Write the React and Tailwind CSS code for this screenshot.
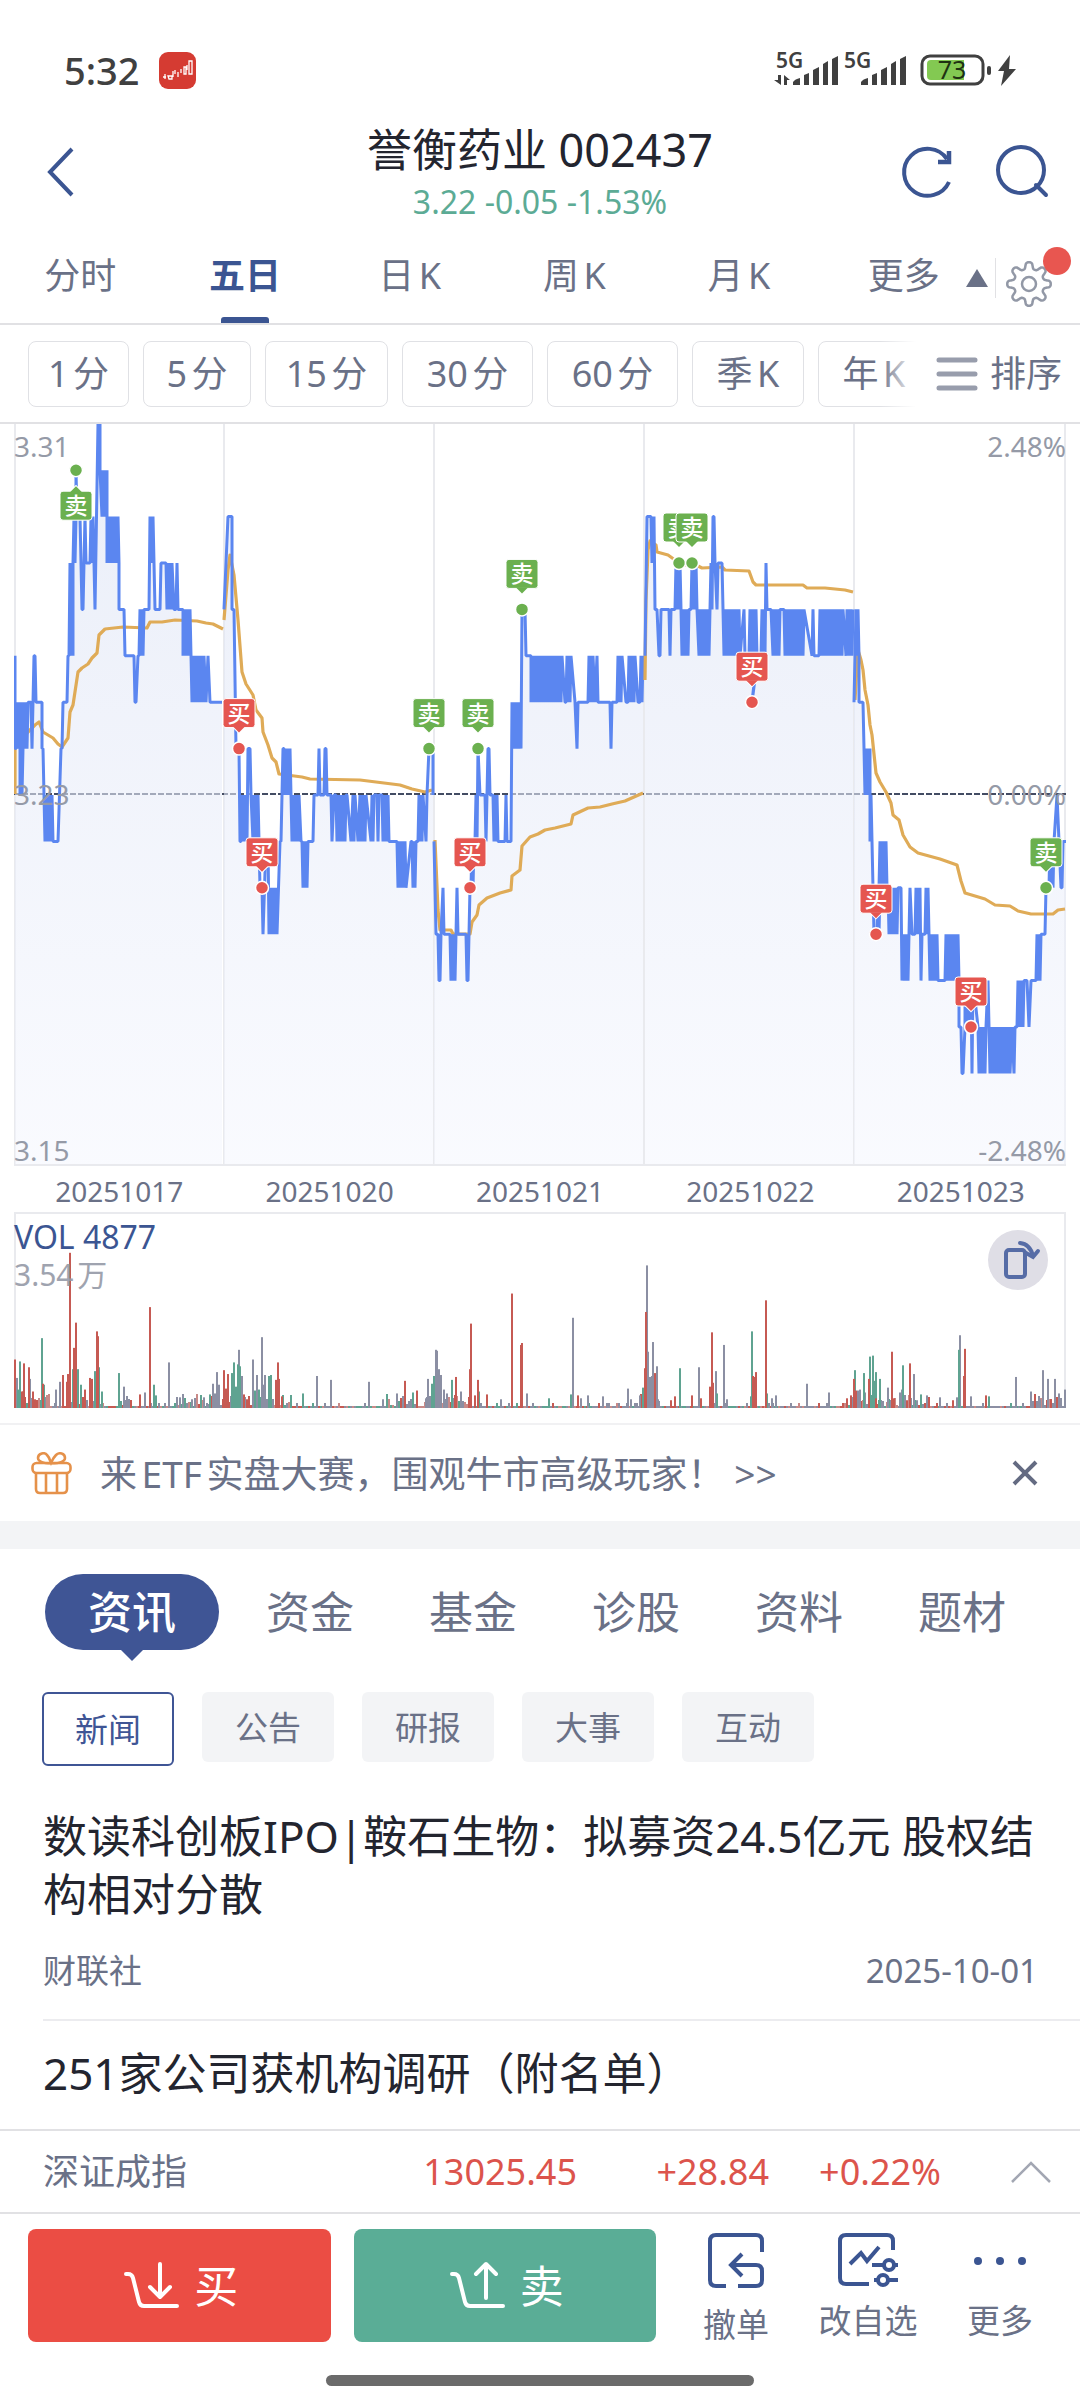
import React from "react";

const BASE_Y = 795;
const STEP_Y = 46.4;
const yOf = (level) => BASE_Y - STEP_Y * level;

// A two-item entry is a point [x, ticks from the reference price];
// a four-item entry is a fast oscillation [x1, x2, level a, level b].
const PRICE = [
  [[15, 3], [15, 1], [16, 20, 1, 2], [20, 22, 0, 2], [23, 28, 1, 2], [31, 2], [32, 1], [33, 2], [34, 3], [35, 3], [36, 2], [42, 2], [42, 1], [43, 1], [45, -1], [45, 53, -1, 0], [54, -1], [58, -1], [61, 1], [62, 1], [63, 2], [67, 2], [68, 3], [69, 73, 3, 5], [73, 76, 5, 6], [76, 7], [77, 6], [80, 6], [82, 4], [83, 4], [85, 6], [86, 5], [89, 5], [90, 94, 5, 6], [95, 4], [98, 8], [100, 8], [100, 7], [102, 107, 6, 7], [107, 119, 5, 6], [119, 4], [124, 4], [125, 3], [134, 3], [135, 2], [136, 2], [138, 3], [139, 144, 3, 4], [149, 4], [150, 6], [150, 153, 5, 6], [155, 4], [160, 4], [161, 5], [166, 5], [167, 172, 4, 5], [174, 4], [176, 178, 4, 5], [183, 4], [183, 191, 3, 4], [192, 201, 2, 3], [203, 2], [204, 3], [206, 2], [208, 3], [210, 2], [222, 2]],
  [[224, 4], [226, 5], [228, 6], [232, 6], [232, 4], [234, 4], [236, 1], [239, 1], [240, -1], [241, 247, -1, 0], [248, 1], [250, 1], [251, 0], [253, 258, -1, 0], [260, -2], [262, -2], [263, -3], [266, -1], [268, -1], [269, 277, -3, -2], [280, -1], [281, -1], [283, 1], [284, 290, 1, 0], [291, 299, 0, -1], [301, -1], [302, 308, -1, -2], [309, -1], [313, -1], [314, 0], [318, 0], [319, 1], [320, 0], [324, 0], [325, 1], [326, 1], [327, 0], [331, 0], [332, -1], [334, 0], [336, 346, 0, -1], [347, 0], [351, -1], [353, 355, 0, -1], [358, -1], [360, 366, 0, -1], [371, -1], [372, 374, 0, -1], [377, 379, 0, -1], [382, 389, 0, -1], [396, -1], [397, 406, -1, -2], [411, -1], [412, 416, -1, -2], [418, -1], [419, 423, 0, -1], [426, -1], [427, 0], [429, 1], [433, 1], [433, 0]],
  [[434, -1], [436, -3], [438, -3], [439, -4], [440, -4], [441, -3], [443, -2], [444, -3], [450, -3], [451, 455, -4, -3], [456, -3], [457, -2], [458, -3], [466, -3], [467, -4], [468, -4], [469, -3], [470, -2], [471, 474, -2, -1], [475, 477, -1, 0], [478, 1], [480, 0], [485, 0], [486, -1], [487, 0], [488, 1], [489, 1], [490, 0], [492, 0], [493, 498, 0, -1], [505, -1], [506, 0], [507, -1], [511, -1], [512, 2], [513, 521, 1, 2], [522, 4], [525, 4], [526, 3], [531, 3], [531, 562, 2, 3], [565, 2], [566, 571, 2, 3], [575, 2], [577, 1], [578, 2], [586, 2], [588, 593, 2, 3], [595, 2], [597, 3], [598, 2], [610, 2], [611, 1], [612, 2], [616, 2], [617, 622, 2, 3], [626, 2], [628, 635, 2, 3], [638, 2], [640, 643, 2, 3]],
  [[645, 3], [647, 6], [651, 6], [652, 5], [654, 6], [655, 4], [657, 4], [659, 3], [660, 3], [661, 4], [669, 4], [670, 3], [671, 4], [674, 4], [675, 680, 4, 5], [682, 689, 3, 4], [691, 697, 4, 5], [699, 702, 3, 4], [703, 710, 3, 4], [710, 712, 4, 5], [713, 6], [714, 6], [715, 5], [717, 4], [718, 5], [722, 5], [723, 4], [724, 740, 3, 4], [744, 4], [745, 3], [746, 3], [749, 757, 3, 4], [752, 2], [758, 3], [761, 765, 3, 4], [766, 5], [767, 4], [770, 4], [771, 4], [773, 780, 3, 4], [784, 4], [785, 804, 3, 4], [812, 3], [813, 4], [814, 3], [818, 3], [819, 822, 3, 4], [824, 843, 3, 4], [846, 853, 3, 4]],
  [[854, 2], [855, 859, 3, 4], [859, 2], [863, 2], [864, 1], [865, 870, 0, 1], [870, 872, -1, 0], [873, -2], [874, -3], [876, -3], [877, 880, -3, -2], [879, 887, -2, -1], [888, -2], [889, 898, -3, -2], [901, -2], [902, 909, -4, -3], [910, -2], [912, -3], [915, 920, -3, -2], [921, -4], [922, -3], [925, 929, -3, -2], [930, 938, -4, -3], [944, -4], [945, 959, -4, -3], [959, -5], [961, -5], [962, -6], [963, -6], [965, -5], [965, 971, -4, -5], [972, -6], [973, -4], [978, -5], [979, 986, -6, -5], [988, -4], [989, -5], [990, 1010, -6, -5], [1012, -5], [1014, -6], [1015, -5], [1017, 1024, -5, -4], [1027, -4], [1029, -5], [1031, -4], [1035, -4], [1036, 1041, -4, -3], [1045, -3], [1046, -2], [1049, 1054, -2, -1], [1057, 0], [1059, -1], [1061, -2], [1062, -2], [1063, -1], [1066, -1]],
];

const AVERAGE = [
  "15,794 15,748 25,735 35,725 39,722 43,732 53,738 58,744 62,747 68,738 70,712 73,705 78,672 82,668 88,664 92,658 97,653 99,635 105,629 123,627 147,628 150,622 162,622 175,620 197,621 206,623 213,624 223,629",
  "224,620 228,570 230,555 234,575 238,620 242,672 246,684 253,695 256,710 262,718 263,732 268,745 272,758 276,762 279,774 302,777 310,779 360,780 376,782 400,785 412,789 425,792 432,790",
  "435,840 438,910 440,930 451,930 453,934 470,934 472,922 477,915 479,905 487,898 500,893 511,890 512,876 520,870 522,846 530,837 538,834 545,830 555,828 571,824 573,815 588,808 600,807 612,804 625,801 643,793",
  "645,680 646,600 648,550 650,541 656,545 657,552 668,555 675,560 683,565 698,566 702,568 722,567 725,570 749,571 753,582 756,585 803,585 807,588 825,588 845,590 853,592",
  "855,700 858,650 861,660 863,670 865,690 868,705 870,725 872,735 876,773 880,782 886,792 891,803 893,815 899,820 903,835 910,847 918,853 940,859 957,865 961,881 965,893 985,899 995,905 1010,906 1018,911 1031,914 1053,914 1058,910 1065,909",
];

const TRADES = [
  { x: 76, level: 7, side: "sell", below: true },
  { x: 239, level: 1, side: "buy" },
  { x: 262, level: -2, side: "buy" },
  { x: 429, level: 1, side: "sell" },
  { x: 470, level: -2, side: "buy" },
  { x: 478, level: 1, side: "sell" },
  { x: 522, level: 4, side: "sell" },
  { x: 679, level: 5, side: "sell" },
  { x: 692, level: 5, side: "sell" },
  { x: 752, level: 2, side: "buy" },
  { x: 876, level: -3, side: "buy" },
  { x: 971, level: -5, side: "buy" },
  { x: 1046, level: -2, side: "sell" },
];

const VOLUME = {
  "#8b8fa3": "17,31 30,30 56,19 60,27 124,22 127,9 145,16 169,47 180,11 192,9 204,11 213,25 215,15 217,37 219,24 239,60 242,33 253,50 257,34 262,73 263,24 265,34 317,33 331,29 369,27 383,9 397,15 426,10 428,30 436,60 437,59 439,40 441,34 444,19 447,15 461,17 501,9 527,15 573,93 581,10 588,13 603,12 628,20 631,9 640,13 647,147 648,58 650,32 652,33 653,68 657,43 658,9 699,42 716,38 724,65 727,9 772,10 776,13 807,25 829,16 858,18 860,19 865,16 888,21 900,16 902,19 914,35 917,8 927,13 940,11 957,11 960,75 971,12 1016,32 1031,17 1040,9 1043,39 1048,30 1055,30 1059,15 1061,8 1065,19",
  "#5fa391": "18,19 20,48 42,72 44,24 73,40 78,40 81,24 95,38 99,42 102,17 119,36 154,24 156,13 210,14 232,36 234,47 236,22 238,45 240,43 255,18 259,19 269,33 271,34 303,15 413,16 432,25 434,33 452,29 479,17 549,10 571,14 643,21 680,41 717,15 751,12 752,79 767,15 855,39 864,36 870,53 873,54 874,28 876,37 880,30 903,44 921,14 959,60 989,12",
  "#c65a53": "15,50 22,17 23,17 24,46 29,42 33,17 35,9 43,25 63,34 67,27 68,35 70,160 74,62 76,88 85,19 90,31 92,30 97,79 98,74 140,14 150,104 224,39 226,20 228,35 244,14 247,9 276,29 278,47 279,30 282,12 405,28 417,18 456,32 470,40 471,87 475,13 478,29 487,14 512,118 521,65 522,67 578,13 645,41 646,99 655,36 675,12 671,8 692,13 701,10 710,22 712,78 713,26 753,33 754,32 756,37 766,111 847,10 851,13 854,30 856,18 869,30 876,10 892,58 894,10 907,8 910,46 953,8 964,33 965,61 986,13 1057,11",
};
const VOLUME_SCALE = 0.97;

function expand(series) {
  const pts = [];
  series.forEach((item) => {
    if (item.length === 2) {
      pts.push([item[0], yOf(item[1])]);
      return;
    }
    const [x1, x2, a, b] = item;
    let high = false;
    for (let x = x1; x <= x2; x += 1) {
      pts.push([x, yOf(high ? b : a)]);
      high = !high;
    }
  });
  return pts;
}

function TradeTag({ x, level, side, below }) {
  const y = yOf(level);
  const color = side === "buy" ? "#e55650" : "#6bb04f";
  const top = below ? y + 21 : y - 50;
  const pointer = below
    ? `M${x - 6} ${top + 1} L${x} ${top - 5} L${x + 6} ${top + 1}`
    : `M${x - 6} ${top + 28} L${x} ${top + 34} L${x + 6} ${top + 28}`;
  return (
    <g>
      <path d={pointer} fill={color} stroke="#fff" strokeWidth="2" />
      <rect x={x - 16} y={top} width="32" height="29" rx="3" fill={color} stroke="#fff" strokeWidth="1" />
      <path d={pointer} fill={color} />
      <text x={x} y={top + 23} fontSize="23" textAnchor="middle" fill="#fff" fontWeight="500">
        {side === "buy" ? "买" : "卖"}
      </text>
      <circle cx={x} cy={y} r="6.5" fill={color} stroke="#fff" strokeWidth="1.5" />
    </g>
  );
}

function PriceChart() {
  return (
    <svg viewBox="14 424 1052 742" className="block h-auto w-full" role="img" aria-label="五日走势">
      <defs>
        <linearGradient id="area" gradientUnits="userSpaceOnUse" x1="0" y1="424" x2="0" y2="1166">
          <stop offset="0" stopColor="#dbe2f4" />
          <stop offset="1" stopColor="#f5f7fe" />
        </linearGradient>
      </defs>
      <g stroke="#e9eaee" strokeWidth="2">
        {[15, 224, 434, 644, 854, 1065].map((x) => (
          <line key={x} x1={x} x2={x} y1="424" y2="1165" />
        ))}
        <line x1="14" x2="1066" y1="1165" y2="1165" />
      </g>
      <line x1="14" x2="1066" y1="794" y2="794" stroke="#434c63" strokeWidth="2" strokeDasharray="6 2" />
      {PRICE.map((day, i) => {
        const pts = expand(day);
        const line = pts.map((p) => p.join(",")).join(" ");
        return (
          <g key={i}>
            <polygon
              points={`${pts[0][0]},1164 ${line} ${pts[pts.length - 1][0]},1164`}
              fill="url(#area)"
              fillOpacity="0.58"
            />
            <polyline points={AVERAGE[i]} fill="none" stroke="#dfab57" strokeWidth="3.2" strokeLinejoin="round" />
            <polyline points={line} fill="none" stroke="#5b86f0" strokeWidth="3" strokeLinejoin="bevel" />
          </g>
        );
      })}
      {TRADES.map((t) => (
        <TradeTag key={t.x} {...t} />
      ))}
    </svg>
  );
}

function VolumeChart() {
  const small = [];
  const colors = ["#8b8fa3", "#5fa391", "#c65a53", "#8b8fa3", "#c98a88"];
  const busy = [[15, 50], [62, 104], [120, 132], [176, 240], [232, 292], [385, 420], [425, 470], [640, 660], [845, 930], [1030, 1066]];
  for (let i = 0; i < 525; i += 1) {
    const x = 15 + i * 2;
    const r = (i * 7919 + ((i * i) % 31) * 977) % 101;
    const active = busy.some(([a, b]) => x >= a && x <= b);
    small.push([x, active ? 2 + (r % 13) : r > 84 ? 5 : 2, colors[r % 5]]);
  }
  return (
    <svg viewBox="14 1212 1052 197" className="block h-auto w-full" role="img" aria-label="成交量">
      <path d="M15 1408 V1213 H1065 V1408" fill="none" stroke="#e9eaee" strokeWidth="2" />
      {small.map(([x, h, c]) => (
        <rect key={x} x={x - 1} y={1408 - h} width="2" height={h} fill={c} />
      ))}
      {Object.entries(VOLUME).map(([color, list]) =>
        list.split(" ").map((pair) => {
          const [x, v] = pair.split(",").map(Number);
          const h = v * VOLUME_SCALE;
          return <rect key={color + pair} x={x - 1} y={1408 - h} width="2" height={h} fill={color} />;
        })
      )}
    </svg>
  );
}

function StatusBar() {
  return (
    <div className="flex h-[140px] items-center justify-between pl-16 pr-[62px]">
      <div className="flex items-center gap-[19px]">
        <span className="text-[38px] leading-none font-medium text-[#404040]">5:32</span>
        <svg width="37" height="37" viewBox="0 0 37 37">
          <rect width="37" height="37" rx="9" fill="#d53b32" />
          <path d="M4 25 h3 M6 22 v5 M9 24 h4 v3 h-3 z M14 19 v6 M16 18 v4 M19 20 v5 M22 17 v4 M25 15 h2 v7 h-2 z M30 9 h3 v13 h-3 z M28 13 v5" fill="none" stroke="#fff" strokeWidth="1.3" />
        </svg>
      </div>
      <svg width="244" height="60" viewBox="774 39 244 60" role="img" aria-label="5G 信号，电量 73%">
        <g fill="#404040">
          <text x="776" y="67" fontSize="21" fontWeight="600">5G</text>
          <text x="844" y="67" fontSize="21" fontWeight="600">5G</text>
          <path d="M778 74 h3 v10 l-7-5 h4z M784 84 v-10 l6 5 h-3 v5z" />
          {[793, 861].map((x) => (
            <g key={x}>
              <path d={`M${x} 84 v-3 q2-3 7-4 v7z`} />
              <path d={`M${x + 11} 84 v-10 l5-2 v12z`} />
              <path d={`M${x + 20} 84 v-15 l6-3 v18z`} />
              <path d={`M${x + 30} 84 v-21 l5-3 v24z`} />
              <path d={`M${x + 39} 84 v-26 l6-3 v29z`} />
            </g>
          ))}
          <rect x="987" y="65" width="4" height="9" rx="2" />
          <path d="M1010 54 l-12 16 h6 l-3 15 L1016 68 h-7z" />
        </g>
        <rect x="922" y="55" width="61" height="28" rx="8" fill="#fff" stroke="#404040" strokeWidth="3" />
        <path d="M964 59 H931 q-4 0-4 4 V75 q0 4 4 4 H964z" fill="#83c952" />
        <text x="952" y="78" fontSize="25" textAnchor="middle" fill="#1f3312">73</text>
      </svg>
    </div>
  );
}

function Header() {
  return (
    <header className="grid h-[92px] grid-cols-[1fr_auto_1fr] items-center">
      <button aria-label="返回" className="justify-self-start pl-[46px]">
        <svg width="30" height="52" viewBox="0 0 30 52" fill="none" stroke="#3b5592" strokeWidth="4">
          <path d="M26 3 L4 26 L26 49" />
        </svg>
      </button>
      <div className="flex flex-col items-center">
        <h1 className="text-[45px] leading-[60px] text-[#23252f]">誉衡药业 002437</h1>
        <p className="text-[32px] leading-[44px] text-[#5cab95]">3.22 -0.05 -1.53%</p>
      </div>
      <div className="flex items-center gap-[34px] justify-self-end pr-[30px]">
        <button aria-label="刷新">
          <svg className="block" width="60" height="60" viewBox="0 0 60 60" fill="none" stroke="#3b5592" strokeWidth="4">
            <path d="M51 17 A23.500 23.500 0 1 0 53 40" />
            <path d="M53 9 V20 H42" strokeWidth="4.500" />
          </svg>
        </button>
        <button aria-label="搜索">
          <svg className="block" width="60" height="60" viewBox="0 0 60 60" fill="none" stroke="#3b5592" strokeWidth="4">
            <circle cx="31" cy="28" r="23" />
            <path d="M46 43 L56 53" strokeLinecap="round" />
          </svg>
        </button>
      </div>
    </header>
  );
}

function gearPath() {
  const pts = [];
  for (let i = 0; i < 160; i += 1) {
    const a = (i * 2 * Math.PI) / 160;
    const r = 18.5 + 3.4 * Math.tanh(1.8 * Math.cos(8 * a));
    pts.push(`${(24 + r * Math.cos(a)).toFixed(1)} ${(24 + r * Math.sin(a)).toFixed(1)}`);
  }
  return `M${pts.join(" L")} Z`;
}

function PeriodTabs() {
  return (
    <nav className="flex h-[93px] items-stretch border-b-2 border-[#e1e1e4]">
      <div className="-ml-0.5 grid flex-1 grid-cols-6 text-[36px] leading-[50px] text-[#6a7187]">
        {["分时", "五日", "日K", "周K", "月K", "更多"].map((t) =>
          t === "五日" ? (
            <button key={t} aria-current="true" className="flex flex-col items-center justify-between pt-[19px] font-bold text-[#3b5592]">
              {t}
              <span className="h-[6px] w-12 rounded-t-[3px] bg-[#3b5592]" />
            </button>
          ) : (
            <button key={t} className="flex justify-center pt-[19px] [text-autospace:normal]">{t}</button>
          )
        )}
      </div>
      <div className="flex w-[94px] items-center">
        <button aria-label="展开更多">
          <svg width="22" height="18" viewBox="0 0 22 18" className="-ml-5 block">
            <path d="M11 0 L22 18 H0z" fill="#6a7187" />
          </svg>
        </button>
        <span className="mx-[7px] h-10 w-px bg-[#e1e1e4]" />
        <button aria-label="设置" className="relative mt-3 ml-0.5">
          <svg width="48" height="48" viewBox="0 0 48 48" fill="none" stroke="#9298a6" strokeWidth="2.500" className="block">
            <path d={gearPath()} strokeLinejoin="round" />
            <circle cx="24" cy="24" r="7" />
          </svg>
          <span className="absolute -top-[13px] -right-[18px] size-7 rounded-full bg-[#e85650]" />
        </button>
      </div>
    </nav>
  );
}

function MinuteChips() {
  const chips = [
    ["1分", "w-[101px]"],
    ["5分", "w-[108px]"],
    ["15分", "w-[123px]"],
    ["30分", "w-[131px]"],
    ["60分", "w-[131px]"],
    ["季K", "w-[112px]"],
    ["年K", "w-[112px]"],
  ];
  return (
    <div className="flex h-[99px] items-center border-b-2 border-[#e1e1e4] text-[36px] text-[#6a7187]">
      <div className="relative flex min-w-0 flex-1 gap-[14px] overflow-hidden pl-7">
        {chips.map(([t, w]) => (
          <button key={t} className={`${w} h-[66px] shrink-0 rounded-lg border border-[#e0e1e5] leading-none whitespace-nowrap [text-autospace:normal]`}>
            {t}
          </button>
        ))}
        <span className="absolute inset-y-0 right-0 w-9 bg-linear-to-r from-white/0 to-white" />
      </div>
      <button className="flex shrink-0 items-center gap-3 pr-[18px] pl-5 leading-none">
        <svg width="42" height="34" viewBox="0 0 42 34" stroke="#989dac" strokeWidth="5" strokeLinecap="round">
          <path d="M3 3 H39 M3 17 H39 M3 31 H39" />
        </svg>
        排序
      </button>
    </div>
  );
}

function Charts() {
  return (
    <section className="px-[14px] pb-[14px]">
      <div className="relative text-[28px] leading-8 text-[#959aa7]">
        <PriceChart />
        <span className="absolute top-[6px] left-0">3.31</span>
        <span className="absolute top-[354px] left-0">3.23</span>
        <span className="absolute bottom-0 left-0">3.15</span>
        <span className="absolute top-[6px] right-0">2.48%</span>
        <span className="absolute top-[354px] right-0">0.00%</span>
        <span className="absolute right-0 bottom-0">-2.48%</span>
      </div>
      <div className="grid h-[46px] grid-cols-5 items-center pt-1 text-center text-[28px] leading-none text-[#6a7187]">
        {["20251017", "20251020", "20251021", "20251022", "20251023"].map((d) => (
          <span key={d}>{d}</span>
        ))}
      </div>
      <div className="relative">
        <VolumeChart />
        <span className="absolute top-[5px] left-0 text-[32px] leading-10 text-[#3b5592]">VOL 4877</span>
        <span className="absolute top-[43px] left-0 text-[30px] leading-10 text-[#959aa7] opacity-90 [text-autospace:normal]">3.54万</span>
        <button aria-label="横屏" className="absolute top-[18px] right-[18px] flex size-[60px] items-center justify-center rounded-full bg-[#dfdee6]">
          <svg width="60" height="60" viewBox="0 0 60 60" fill="none" stroke="#566ca6" strokeWidth="4">
            <rect x="18" y="20" width="19" height="27" rx="3" />
            <path d="M32 13 Q42 14 45 26 M38 23 L45 27 L50 21" strokeLinecap="round" />
          </svg>
        </button>
      </div>
    </section>
  );
}

function Promo() {
  return (
    <div className="flex h-[98px] items-center border-t-2 border-[#f1f1f3] pr-[42px] pl-[31px]">
      <svg width="41" height="43" viewBox="0 0 41 43" fill="none" stroke="#e5914a" strokeWidth="2.600" className="shrink-0">
        <rect x="1.500" y="11" width="38" height="10" rx="4" />
        <path d="M5 21 V37 q0 4 4 4 H32 q4 0 4-4 V21 M15 21 V41 M26 21 V41" />
        <path d="M20 11 C15 12 7 10 7 6 C7 1 14 0 16 3 C19 6 19 9 20 11 C21 9 22 6 25 3 C28 0 34 1 34 6 C34 10 26 12 20 11z" />
      </svg>
      <a href="#etf" className="ml-7 flex-1 text-[37px] leading-none whitespace-nowrap text-[#6a7187] [text-autospace:normal]">
        来ETF实盘大赛，围观牛市高级玩家！ &gt;&gt;
      </a>
      <button aria-label="关闭">
        <svg width="26" height="26" viewBox="0 0 26 26" stroke="#646b82" strokeWidth="4" className="block">
          <path d="M2 2 L24 24 M24 2 L2 24" />
        </svg>
      </button>
    </div>
  );
}

function Information() {
  return (
    <section>
      <nav className="flex h-[101px] items-start gap-[75px] pt-[25px] pl-[45px] text-[44px] leading-[76px] text-[#6a7187]">
        <button aria-current="true" className="relative -mr-7 h-[76px] w-[174px] shrink-0 rounded-full bg-[#3f5595] font-medium text-white">
          资讯
          <svg width="24" height="12" viewBox="0 0 24 12" className="absolute -bottom-[11px] left-[75px]">
            <path d="M0 0 H24 L12 12z" fill="#3f5595" />
          </svg>
        </button>
        {["资金", "基金", "诊股", "资料", "题材"].map((t) => (
          <button key={t} className="shrink-0">{t}</button>
        ))}
      </nav>
      <nav className="mt-[42px] flex items-start gap-7 pl-[42px] text-[33px] text-[#6a7187]">
        <button aria-current="true" className="h-[74px] w-[132px] rounded-md border-2 border-[#3f5595] leading-none text-[#3f5595]">新闻</button>
        {["公告", "研报", "大事", "互动"].map((t) => (
          <button key={t} className="h-[70px] w-[132px] rounded-md bg-[#f3f4f6] leading-none">{t}</button>
        ))}
      </nav>
      <article className="ml-[43px] border-b-2 border-[#ececef] pt-[41px] pr-[42px] pb-[24px]">
        <h2 className="text-[44px] leading-[58px] text-[#23252f]">
          <a href="#news-1">数读科创板IPO|鞍石生物：拟募资24.5亿元 股权结构相对分散</a>
        </h2>
        <div className="mt-[24px] flex justify-between text-[33px] leading-[48px] text-[#6a7187]">
          <span>财联社</span>
          <time>2025-10-01</time>
        </div>
      </article>
      <article className="ml-[43px] h-[108px] pt-[23px]">
        <h2 className="text-[44px] leading-[58px] text-[#23252f]">
          <a href="#news-2">251家公司获机构调研（附名单）</a>
        </h2>
      </article>
    </section>
  );
}

function IndexBar() {
  return (
    <div className="flex h-[85px] items-center border-y-2 border-[#e1e1e4] pr-[29px] pl-[43px] text-[36px] leading-none text-[#dc544c]">
      <span className="flex-1 text-[#6a7187]">深证成指</span>
      <span className="w-[156px] text-right">13025.45</span>
      <span className="w-[192px] text-right">+28.84</span>
      <span className="w-[172px] text-right">+0.22%</span>
      <button aria-label="展开指数" className="ml-[70px]">
        <svg width="40" height="22" viewBox="0 0 40 22" fill="none" stroke="#a3a7b3" strokeWidth="2.500" className="block">
          <path d="M1 21 L20 2 L39 21" />
        </svg>
      </button>
    </div>
  );
}

function CartIcon({ up }) {
  return (
    <svg width="56" height="50" viewBox="0 0 56 50" fill="none" stroke="#fff" strokeWidth="4" strokeLinecap="round" strokeLinejoin="round">
      <path d="M2 13 h2 q4 0 5 4 l6 24 q1 4 5 4 h33" />
      {up ? <path d="M36 37 V4 M26 13 L36 3 L46 13" /> : <path d="M36 3 V35 M26 26 L36 36 L46 26" />}
    </svg>
  );
}

function TradeBar() {
  return (
    <footer className="pt-[15px] pb-[17px]">
      <div className="flex pl-7">
        <button className="flex h-[113px] flex-1 items-center justify-center gap-[14px] rounded-lg bg-[#eb4d44] pl-1 text-[44px] leading-none text-white">
          <CartIcon />买
        </button>
        <button className="ml-[23px] flex h-[113px] flex-1 items-center justify-center gap-[14px] rounded-lg bg-[#5aad96] pl-1 text-[44px] leading-none text-white">
          <CartIcon up />卖
        </button>
        <div className="flex w-[424px] items-start pt-1 pr-3 pl-3 text-[33px] leading-[48px] text-[#6a7187]">
          <button className="flex w-[136px] flex-col items-center gap-[12px]">
            <svg width="56" height="56" viewBox="0 0 56 56" fill="none" stroke="#3b5592" strokeWidth="4">
              <path d="M18 53 H8 q-6 0-6-6 V8 q0-6 6-6 H48 q6 0 6 6 V19" />
              <path d="M34 21 L23 32 L34 43 M23 32 H48 q6 0 6 6 V47 q0 6-6 6 H30" />
            </svg>
            撤单
          </button>
          <button className="flex w-[128px] flex-col items-center gap-2">
            <svg width="60" height="56" viewBox="0 0 60 56" fill="none" stroke="#3b5592" strokeWidth="4">
              <path d="M31 51 H8 q-6 0-6-6 V8 q0-6 6-6 H49 q6 0 6 6 V17" />
              <path d="M12 31 L23 20 L29 28 L41 14 M34 32 H60 M36 47 H60" />
              <circle cx="51" cy="32" r="5" fill="#fff" />
              <circle cx="45" cy="47" r="5" fill="#fff" />
            </svg>
            改自选
          </button>
          <button className="flex w-[136px] flex-col items-center gap-2">
            <svg width="56" height="56" viewBox="0 0 56 56" fill="#3b5592">
              <circle cx="6" cy="28" r="4" />
              <circle cx="28" cy="28" r="4" />
              <circle cx="50" cy="28" r="4" />
            </svg>
            更多
          </button>
        </div>
      </div>
      <div className="mx-auto mt-[26px] h-[11px] w-[428px] rounded-full bg-[#6b6b6b]" />
    </footer>
  );
}

export default function App() {
  return (
    <main className="w-full overflow-hidden bg-white font-['Noto_Sans','Noto_Sans_CJK_SC',sans-serif]">
      <StatusBar />
      <div className="-mt-5 pb-5">
        <Header />
      </div>
      <PeriodTabs />
      <MinuteChips />
      <Charts />
      <Promo />
      <div className="h-7 bg-[#f3f4f6]" />
      <Information />
      <IndexBar />
      <TradeBar />
    </main>
  );
}
